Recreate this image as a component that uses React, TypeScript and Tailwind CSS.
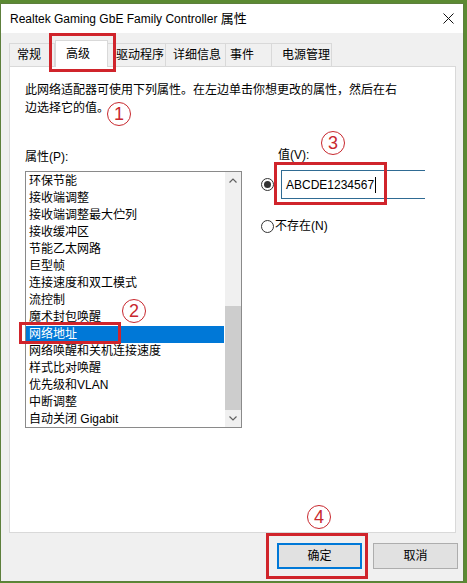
import React from 'react';

const items = [
  '环保节能',
  '接收端调整',
  '接收端调整最大伫列',
  '接收缓冲区',
  '节能乙太网路',
  '巨型帧',
  '连接速度和双工模式',
  '流控制',
  '魔术封包唤醒',
  '网络地址',
  '网络唤醒和关机连接速度',
  '样式比对唤醒',
  '优先级和VLAN',
  '中断调整',
  '自动关闭 Gigabit',
];

const tabs = [
  { label: '常规', w: 'w-[46px]', pl: 'pl-[7px]' },
  { label: '高级', w: 'w-[53px]', pl: 'pl-[10px]', active: true },
  { label: '驱动程序', w: 'w-[58px]', pl: 'pl-[8px]' },
  { label: '详细信息', w: 'w-[60px]', pl: 'pl-[7px]' },
  { label: '事件', w: 'w-[46px]', pl: 'pl-[4px]' },
  { label: '电源管理', w: 'w-[60px]', pl: 'pl-[10px]' },
];

function Circled({ n, className }: { n: string; className: string }) {
  return (
    <div
      className={`absolute w-[24px] h-[24px] rounded-full border-[1.5px] border-[#c8282e] flex items-center justify-center text-[#c8282e] text-[18px] leading-none font-['Liberation_Sans',sans-serif] ${className}`}
    >
      {n}
    </div>
  );
}

export default function App() {
  return (
    <div className="relative w-[467px] h-[583px] bg-[#5b8a32] overflow-hidden text-black font-['Liberation_Sans','Noto_Sans_CJK_SC',sans-serif]">
      <div className="mt-[3px] w-[464px] h-[579px] border border-[#5d7f3c] bg-[#f0f0f0] flex flex-col">
        {/* Title bar */}
        <div className="h-[29px] bg-white flex items-center justify-between pl-[9px] pr-[9px] shrink-0">
          <span className="text-[12px]">
            Realtek Gaming GbE Family Controller <span className="text-[13px]">属性</span>
          </span>
          <svg width="11" height="11" viewBox="0 0 11 11">
            <path d="M0.5 0.5 L10.5 10.5 M10.5 0.5 L0.5 10.5" stroke="#111" strokeWidth="1" />
          </svg>
        </div>

        {/* Tabs */}
        <div className="h-[33px] flex items-end pl-[8px] shrink-0 text-[12px]">
          {tabs.map((t, i) =>
            t.active ? (
              <div
                key={t.label}
                className={`${t.w} ${t.pl} h-[27px] -mb-px relative z-10 bg-white border border-b-0 border-[#d9d9d9] flex items-center`}
              >
                {t.label}
              </div>
            ) : (
              <div
                key={t.label}
                className={`${t.w} ${t.pl} h-[23px] border-t border-r ${i === 0 ? 'border-l' : ''} border-[#d9d9d9] bg-[#f0f0f0] flex items-center`}
              >
                {t.label}
              </div>
            )
          )}
        </div>

        {/* Panel */}
        <div className="ml-[8px] w-[447px] h-[467px] shrink-0 border border-[#d9d9d9] bg-white pt-[14px] px-[15px] text-[12px] leading-[18px]">
          <div>此网络适配器可使用下列属性。在左边单击你想更改的属性，然后在右</div>
          <div>边选择它的值。</div>

          <div className="mt-[31px] flex gap-[18px]">
            {/* Left column */}
            <div className="w-[217px] flex flex-col">
              <div className="h-[18px]">属性(P):</div>
              <div className="mt-[5px] h-[257px] border border-[#8a8a8a] flex">
                <div className="flex-1 pt-[1px] pr-[1px] overflow-hidden">
                  {items.map((it) => (
                    <div
                      key={it}
                      className={`h-[17px] leading-[17px] pl-[3px] whitespace-nowrap ${it === '网络地址' ? 'bg-[#0078d7] text-white' : ''}`}
                    >
                      {it}
                    </div>
                  ))}
                </div>
                <div className="w-[16px] bg-[#f0f0f0] flex flex-col">
                  <div className="h-[17px] flex items-center justify-center">
                    <svg width="8" height="5" viewBox="0 0 8 5">
                      <path d="M0.5 4.5 L4 1 L7.5 4.5" stroke="#606060" strokeWidth="1.2" fill="none" />
                    </svg>
                  </div>
                  <div className="flex-1 flex flex-col">
                    <div className="h-[117px]" />
                    <div className="flex-1 bg-[#cdcdcd]" />
                  </div>
                  <div className="h-[17px] flex items-center justify-center">
                    <svg width="8" height="5" viewBox="0 0 8 5">
                      <path d="M0.5 0.5 L4 4 L7.5 0.5" stroke="#606060" strokeWidth="1.2" fill="none" />
                    </svg>
                  </div>
                </div>
              </div>
            </div>

            {/* Right column */}
            <div className="flex-1 flex flex-col">
              <div className="h-[18px] -mt-[2px] pl-[18px]">值(V):</div>
              <div className="mt-[6px] flex items-center">
                <div className="ml-[1px] w-[13px] h-[13px] rounded-full border border-[#333] bg-white flex items-center justify-center">
                  <div className="w-[7px] h-[7px] rounded-full bg-[#333]" />
                </div>
                <div className="ml-[7px] w-[144px] h-[29px] border-t border-b border-l border-[#2f6b93] flex items-center pl-[4px] text-[12px]">
                  <span>ABCDE1234567</span>
                  <span className="ml-[1px] w-px h-[16px] bg-black" />
                </div>
              </div>
              <div className="mt-[18px] flex items-center">
                <div className="ml-[1px] w-[13px] h-[13px] rounded-full border border-[#333] bg-white" />
                <span className="ml-[1px]">不存在(N)</span>
              </div>
            </div>
          </div>
        </div>

        {/* Buttons */}
        <div className="flex-1 flex justify-end items-start pt-[10px] pr-[5px] gap-[11px] text-[12px]">
          <div className="w-[85px] h-[26px] bg-[#e1e1e1] border-2 border-[#0078d7] flex items-center justify-center">
            确定
          </div>
          <div className="w-[85px] h-[26px] bg-[#e1e1e1] border border-[#adadad] flex items-center justify-center">
            取消
          </div>
        </div>
      </div>

      {/* Annotations */}
      <div className="absolute left-[49px] top-[33px] w-[67px] h-[39px] border-[3px] border-[#d0242b]" />
      <Circled n="1" className="left-[107px] top-[102px]" />
      <div className="absolute left-[19px] top-[322px] w-[102px] h-[22px] border-[3px] border-[#d0242b]" />
      <Circled n="2" className="left-[122px] top-[299px]" />
      <div className="absolute left-[274px] top-[162px] w-[113px] h-[43px] border-[3px] border-[#d0242b]" />
      <Circled n="3" className="left-[321px] top-[131px]" />
      <div className="absolute left-[266px] top-[533px] w-[102px] h-[46px] border-[3px] border-[#d0242b]" />
      <Circled n="4" className="left-[307px] top-[505px]" />
    </div>
  );
}
